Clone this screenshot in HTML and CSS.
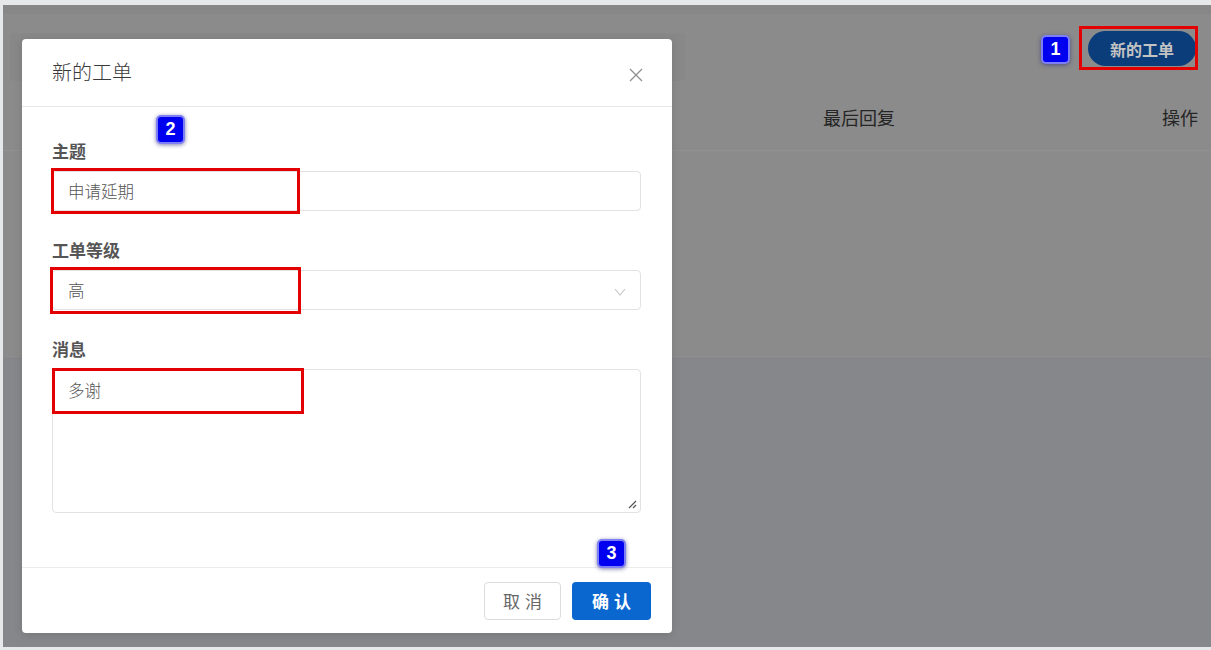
FILE: index.html
```html
<!DOCTYPE html>
<html lang="zh">
<head>
<meta charset="utf-8">
<title>新的工单</title>
<link rel="stylesheet" href="styles.css">
</head>
<body>
<div class="frame">
  <div class="page">
    <div class="topstrip"></div>
    <div class="card">
      <div class="card-head">
        <div class="tabbar"></div>
        <button class="new-btn">新的工单</button>
      </div>
      <div class="thead">
        <span class="th th-last">最后回复</span>
        <span class="th th-op">操作</span>
      </div>
      <div class="tbody"></div>
    </div>
    <div class="rest"></div>
  </div>

  <div class="modal">
    <div class="modal-head">
      <span class="modal-title">新的工单</span>
      <svg class="close" width="16" height="16" viewBox="0 0 16 16"><path d="M2 2 L14 14 M14 2 L2 14" stroke="#8f8f8f" stroke-width="1.3" fill="none"/></svg>
    </div>
    <div class="modal-body">
      <div class="field">
        <div class="label">主题</div>
        <div class="input">申请延期</div>
      </div>
      <div class="field">
        <div class="label">工单等级</div>
        <div class="input select">高
          <svg class="chev" width="14" height="10" viewBox="0 0 14 10"><path d="M2 2 L7 8 L12 2" stroke="#c4c4c4" stroke-width="1.1" fill="none"/></svg>
        </div>
      </div>
      <div class="field">
        <div class="label">消息</div>
        <div class="input textarea">多谢
          <svg class="grip" width="10" height="10" viewBox="0 0 10 10"><path d="M9 2 L2 9 M9 6 L6 9" stroke="#555" stroke-width="1.2" fill="none"/></svg>
        </div>
      </div>
    </div>
    <div class="modal-foot">
      <button class="btn btn-cancel">取消</button>
      <button class="btn btn-ok">确认</button>
    </div>
  </div>

  <div class="mark mark-btn"></div>
  <div class="mark mark-1"></div>
  <div class="mark mark-2"></div>
  <div class="mark mark-3"></div>

  <div class="badge badge-1">1</div>
  <div class="badge badge-2">2</div>
  <div class="badge badge-3">3</div>
</div>
</body>
</html>
```
FILE: styles.css
```css
* { box-sizing: border-box; }
html, body { margin: 0; padding: 0; }
body {
  width: 1211px;
  height: 650px;
  overflow: hidden;
  background: #e7e8ea;
  font-family: "Noto Sans CJK SC", "Noto Sans", sans-serif;
}
.frame {
  position: relative;
  width: 1211px;
  height: 650px;
  padding: 5px 0 3px 3px;
}
.page {
  height: 642px;
  display: flex;
  flex-direction: column;
  background: #86878a;
}
.topstrip {
  height: 9px;
  background: #878788;
}
.card {
  height: 345px;
  background: #8b8b8b;
  display: flex;
  flex-direction: column;
  border-bottom: 1px solid #848486;
}
.card-head {
  height: 67px;
  display: flex;
  align-items: flex-start;
  justify-content: space-between;
  padding: 12px 15px 0 7px;
}
.tabbar {
  width: 675px;
  height: 48px;
  margin-top: 7px;
  background: #888889;
  border-radius: 4px;
}
.new-btn {
  width: 108px;
  height: 35px;
  margin-top: 5px;
  border: none;
  border-radius: 18px;
  background: #0b3d7b;
  color: #c3c3c3;
  font-family: inherit;
  font-size: 16px;
  font-weight: 700;
  padding: 0;
}
.thead {
  height: 70px;
  display: flex;
  align-items: center;
  border-bottom: 1px solid #919191;
  padding-top: 2px;
  font-size: 18px;
  color: #252525;
}
.th-last { margin-left: 820px; }
.th-op { margin-left: auto; margin-right: 13px; }
.tbody { flex: 1; }
.rest { flex: 1; }

/* modal */
.modal {
  position: absolute;
  left: 22px;
  top: 39px;
  width: 650px;
  height: 594px;
  background: #fff;
  border-radius: 4px;
  box-shadow: 0 2px 10px rgba(0,0,0,0.12);
  display: flex;
  flex-direction: column;
}
.modal-head {
  height: 68px;
  border-bottom: 1px solid #e8e8e8;
  display: flex;
  align-items: center;
  justify-content: space-between;
  padding: 0 28px 0 30px;
}
.modal-title {
  font-size: 20px;
  font-weight: 300;
  color: #3a3a3a;
  margin-top: -2px;
}
.close { margin-top: 4px; }
.modal-body {
  flex: 1;
  padding: 33px 31px 0 30px;
  display: flex;
  flex-direction: column;
  gap: 28px;
}
.label {
  font-size: 17px;
  font-weight: 700;
  color: #555;
  line-height: 22px;
  margin-bottom: 9px;
}
.input {
  position: relative;
  height: 40px;
  border: 1px solid #e2e2e2;
  border-radius: 4px;
  padding: 0 15px;
  display: flex;
  align-items: center;
  font-size: 16.5px;
  font-weight: 300;
  color: #555;
}
.chev { position: absolute; right: 13px; top: 16px; }
.textarea {
  height: 144px;
  align-items: flex-start;
  padding-top: 8px;
}
.grip { position: absolute; right: 3px; bottom: 3px; }
.modal-foot {
  height: 66px;
  border-top: 1px solid #ececec;
  display: flex;
  align-items: center;
  justify-content: flex-end;
  gap: 11px;
  padding: 0 21px 0 0;
}
.btn {
  height: 38px;
  border-radius: 4px;
  font-family: inherit;
  font-size: 17px;
  letter-spacing: 5px;
  padding: 0 0 0 5px;
}
.btn-cancel {
  width: 77px;
  background: #fff;
  border: 1px solid #dcdcdc;
  color: #666;
}
.btn-ok {
  width: 79px;
  background: #0a67cf;
  border: none;
  color: #fff;
  font-weight: 700;
}

/* annotations */
.mark {
  position: absolute;
  border: 3px solid #e30000;
}
.mark-btn { left: 1079px; top: 26px; width: 119px; height: 44px; }
.mark-1 { left: 51px; top: 168px; width: 249px; height: 46px; }
.mark-2 { left: 50px; top: 267px; width: 251px; height: 47px; }
.mark-3 { left: 52px; top: 368px; width: 252px; height: 46px; }

.badge {
  position: absolute;
  width: 29px;
  height: 29px;
  background: #0000f0;
  border: 2px solid #7f7ff5;
  border-radius: 5px;
  box-shadow: 0 1px 4px rgba(40,40,120,0.6);
  color: #fff;
  font-family: "Liberation Sans", sans-serif;
  font-weight: 700;
  font-size: 18px;
  display: flex;
  align-items: center;
  justify-content: center;
}
.badge-1 { left: 1041px; top: 35px; }
.badge-2 { left: 156px; top: 115px; }
.badge-3 { left: 597px; top: 539px; }
```
